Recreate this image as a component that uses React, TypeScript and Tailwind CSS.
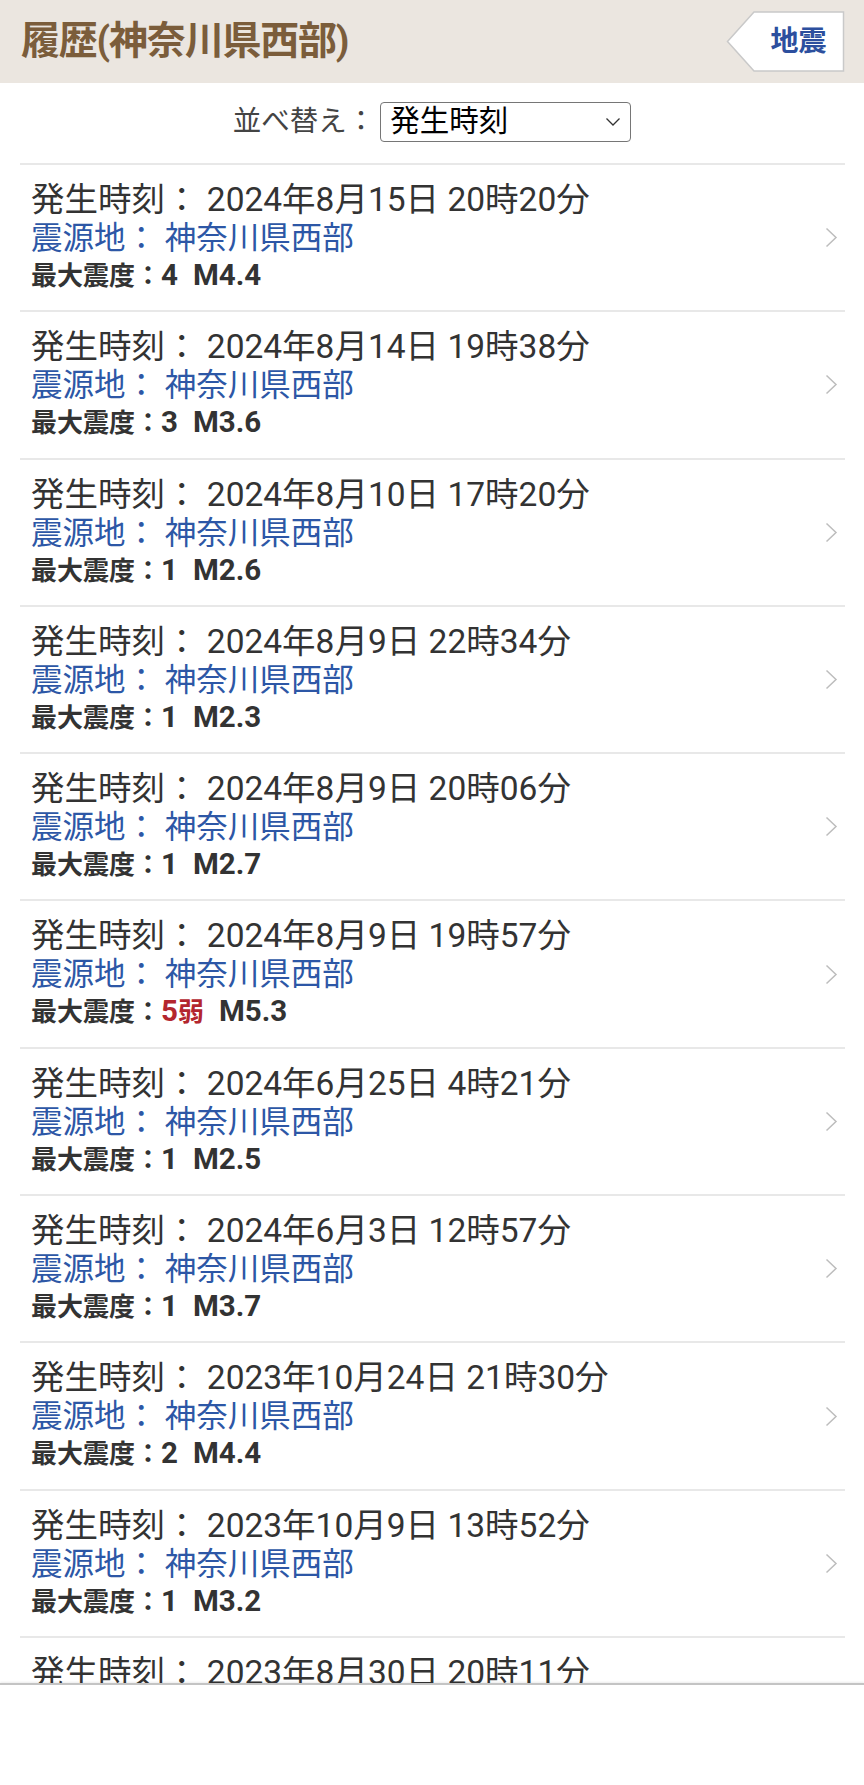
import React from "react";

type Quake = {
  time: string;
  intensity: string;
  magnitude: string;
  strong?: boolean;
};

const quakes: Quake[] = [
  { time: "2024年8月15日 20時20分", intensity: "4", magnitude: "M4.4" },
  { time: "2024年8月14日 19時38分", intensity: "3", magnitude: "M3.6" },
  { time: "2024年8月10日 17時20分", intensity: "1", magnitude: "M2.6" },
  { time: "2024年8月9日 22時34分", intensity: "1", magnitude: "M2.3" },
  { time: "2024年8月9日 20時06分", intensity: "1", magnitude: "M2.7" },
  { time: "2024年8月9日 19時57分", intensity: "5弱", magnitude: "M5.3", strong: true },
  { time: "2024年6月25日 4時21分", intensity: "1", magnitude: "M2.5" },
  { time: "2024年6月3日 12時57分", intensity: "1", magnitude: "M3.7" },
  { time: "2023年10月24日 21時30分", intensity: "2", magnitude: "M4.4" },
  { time: "2023年10月9日 13時52分", intensity: "1", magnitude: "M3.2" },
  { time: "2023年8月30日 20時11分", intensity: "1", magnitude: "M2.9" },
];

const FONT = "font-['Roboto','Noto_Sans_CJK_JP',sans-serif]";

function BackButton() {
  return (
    <div className="relative w-[119px] h-[61px]">
      <svg className="absolute inset-0" width="119" height="61" viewBox="0 0 119 61">
        <polygon
          points="1.5,30.5 28,1 117.5,1 117.5,60 28,60"
          fill="#ffffff"
          stroke="#c9c9c9"
          strokeWidth="1.5"
        />
      </svg>
      <div className="relative flex h-full items-center justify-center pl-[26px] text-[28px] font-bold leading-none text-[#2c4f9e]">
        地震
      </div>
    </div>
  );
}

function Chevron({ className }: { className?: string }) {
  return (
    <svg className={className} width="13" height="21" viewBox="0 0 13 21" fill="none">
      <path d="M1.5 1.5 L11 10.5 L1.5 19.5" stroke="#bdbdbd" strokeWidth="1.5" />
    </svg>
  );
}

// digits and latin in the intensity line render larger than the kanji
function Intensity({ value }: { value: string }) {
  const num = value.replace(/[^0-9]/g, "");
  const rest = value.slice(num.length);
  return (
    <>
      <span className="text-[29.5px]">{num}</span>
      {rest}
    </>
  );
}

function QuakeRow({ q }: { q: Quake }) {
  return (
    <div className="flex h-[147.3px] shrink-0 items-center border-b-2 border-[#e8e8e8]">
      <div className="flex-1 self-start pl-[11px] pt-[15px]">
        <div className="h-[40px] text-[33.5px] leading-[40px] text-[#333333] whitespace-nowrap">
          発生時刻： {q.time}
        </div>
        <div className="h-[38px] text-[31.5px] leading-[38px] text-[#2d57a6] whitespace-nowrap">
          震源地： 神奈川県西部
        </div>
        <div className="h-[34px] text-[26px] font-bold leading-[34px] text-[#333333] whitespace-nowrap">
          最大震度：
          <span className={q.strong ? "text-[#b3262e]" : ""}>
            <Intensity value={q.intensity} />
          </span>
          <span className="ml-[15px] text-[29.5px]">{q.magnitude}</span>
        </div>
      </div>
      <Chevron className="mr-[7px]" />
    </div>
  );
}

export default function App() {
  return (
    <div className={`flex h-[1785px] w-[864px] flex-col overflow-hidden bg-white ${FONT}`}>
      <header className="flex h-[83px] shrink-0 items-center justify-between bg-[#ebe6e0] pl-[21px] pr-[19px]">
        <h1 className="text-[39px] font-bold leading-none tracking-[-1.2px] text-[#7b5d3b]">
          履歴(神奈川県西部)
        </h1>
        <BackButton />
      </header>

      <div className="flex h-[80px] shrink-0 items-start justify-center gap-[5px] pt-[19px]">
        <span className="h-[40px] text-[28.5px] leading-[40px] text-[#444444]">並べ替え：</span>
        <div className="flex h-[40px] w-[251px] items-center justify-between rounded-[4px] border-[1.5px] border-[#767676] pl-[9px] pr-[9px]">
          <span className="text-[29.5px] leading-none text-black">発生時刻</span>
          <svg width="16" height="10" viewBox="0 0 16 10" fill="none">
            <path d="M1.5 1.5 L8 8 L14.5 1.5" stroke="#333333" strokeWidth="1.3" />
          </svg>
        </div>
      </div>

      <main className="mx-[19px] ml-[20px] flex min-h-0 flex-1 flex-col overflow-hidden border-t-2 border-[#e8e8e8]">
        {quakes.map((q) => (
          <QuakeRow key={q.time} q={q} />
        ))}
      </main>

      <footer className="h-[102px] shrink-0 border-t-2 border-[#c4c4c4] bg-white shadow-[0_-1px_2px_rgba(0,0,0,0.08)]" />
    </div>
  );
}
